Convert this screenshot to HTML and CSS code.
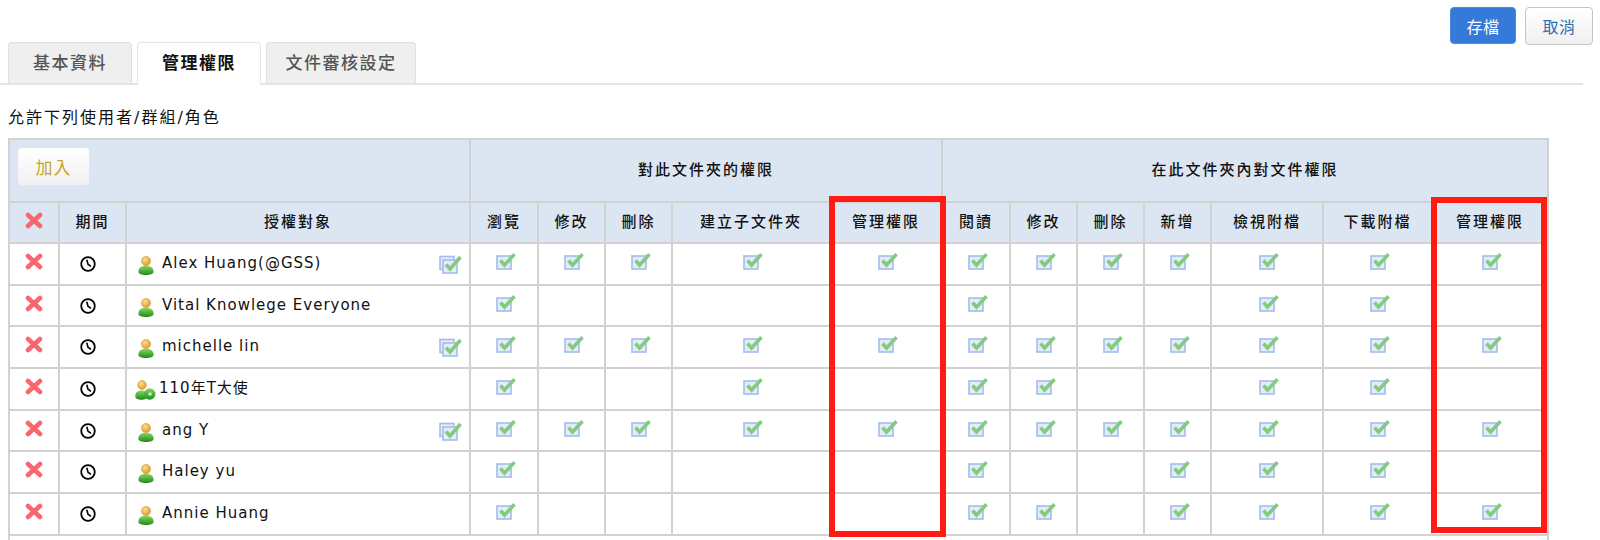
FILE: index.html
```html
<!DOCTYPE html>
<html lang="zh-Hant">
<head>
    <meta charset="UTF-8">
    <meta name="viewport" content="width=device-width, initial-scale=1.0">
    <title>管理權限</title>
    <link rel="stylesheet" href="styles.css">
</head>
<body>
    <!-- icon sprites -->
    <svg class="sprites" width="0" height="0">
        <defs>
            <radialGradient id="headFill" cx="40%" cy="35%" r="70%">
                <stop offset="0" stop-color="#ffe08a"/>
                <stop offset="1" stop-color="#e08f2a"/>
            </radialGradient>
            <linearGradient id="bodyFill" x1="0" y1="0" x2="0" y2="1">
                <stop offset="0" stop-color="#86d65e"/>
                <stop offset="1" stop-color="#1c8c1c"/>
            </linearGradient>
        </defs>
        <symbol id="i-del" viewBox="0 0 18 17">
            <path d="M3 3L15 14M15 3L3 14" fill="none" stroke="#fa656f" stroke-width="4.6" stroke-linecap="round"/>
        </symbol>
        <symbol id="i-clock" viewBox="0 0 16 16">
            <circle cx="8" cy="8" r="6.8" fill="none" stroke="#000" stroke-width="1.8"/>
            <path d="M6.8 3.8L8 8.2L11 10.4" fill="none" stroke="#000" stroke-width="1.6"/>
        </symbol>
        <symbol id="i-user" viewBox="0 0 16 19">
            <path d="M.4 16C.4 12 3 9.800 8 9.800s7.600 2.200 7.600 6.200c0 2-3.400 3-7.600 3s-7.600-1-7.600-3z" fill="url(#bodyFill)"/>
            <circle cx="8" cy="5" r="4.600" fill="url(#headFill)" stroke="#d69a45" stroke-width=".6"/>
        </symbol>
        <symbol id="i-group" viewBox="0 0 21 20">
            <path d="M.3 16.500C.3 12.500 2.500 10.500 6.500 10.500s6 2 6 6c0 2-2.800 3.300-6 3.300s-6.200-1.300-6.200-3.300z" fill="url(#bodyFill)"/>
            <circle cx="7" cy="5" r="4.400" fill="url(#headFill)" stroke="#d69a45" stroke-width=".6"/>
            <circle cx="14.700" cy="14" r="5.800" fill="url(#bodyFill)"/>
            <circle cx="15" cy="14" r="1.800" fill="#c8f0c0"/>
        </symbol>
        <symbol id="i-check" viewBox="0 0 20 18">
            <rect x="1" y="4" width="14" height="13" fill="#e4ecfa" stroke="#a3bdec" stroke-width="1.6"/>
            <path d="M4.500 8.500L8.500 13L18.500 2.300" fill="none" stroke="#84cb80" stroke-width="3.600"/>
        </symbol>
        <symbol id="i-check-all" viewBox="0 0 23 19">
            <rect x="1" y="1.500" width="14" height="13" fill="#e4ecfa" stroke="#a3bdec" stroke-width="1.6"/>
            <rect x="4" y="5" width="14" height="13" fill="#e4ecfa" stroke="#a3bdec" stroke-width="1.6"/>
            <path d="M7 9.500L11 14L21.500 2" fill="none" stroke="#84cb80" stroke-width="3.600"/>
        </symbol>
    </svg>

    <div class="page">
        <div class="toolbar">
            <button class="btn btn-save">存檔</button>
            <button class="btn btn-cancel">取消</button>
        </div>

        <div class="tabs">
            <div class="tab">基本資料</div>
            <div class="tab active">管理權限</div>
            <div class="tab tab-wide">文件審核設定</div>
        </div>

        <p class="allow-label">允許下列使用者/群組/角色</p>

        <div class="table-wrap">
            <table class="perm-table">
                <colgroup>
                    <col class="w50"><col class="w67"><col class="w344">
                    <col class="w68"><col class="w67"><col class="w67"><col class="w158"><col class="w112">
                    <col class="w68"><col class="w67"><col class="w67"><col class="w67"><col class="w112"><col class="w109"><col class="w116">
                </colgroup>
                <thead>
                    <tr class="head-top">
                        <th colspan="3" class="add-cell"><button class="btn-add">加入</button></th>
                        <th colspan="5">對此文件夾的權限</th>
                        <th colspan="7">在此文件夾內對文件權限</th>
                    </tr>
                    <tr class="head-sub">
                        <th><svg class="ic-del"><use href="#i-del"/></svg></th>
                        <th>期間</th>
                        <th>授權對象</th>
                        <th>瀏覽</th><th>修改</th><th>刪除</th><th>建立子文件夾</th><th>管理權限</th>
                        <th>閱讀</th><th>修改</th><th>刪除</th><th>新增</th><th>檢視附檔</th><th>下載附檔</th><th>管理權限</th>
                    </tr>
                </thead>
                <tbody>
                    <tr>
                        <td><svg class="ic-del"><use href="#i-del"/></svg></td>
                        <td><svg class="ic-clock"><use href="#i-clock"/></svg></td>
                        <td><div class="who"><svg class="ic-user"><use href="#i-user"/></svg><span class="who-name">Alex Huang(@GSS)</span><svg class="ic-all"><use href="#i-check-all"/></svg></div></td>
                        <td><svg class="ic-check"><use href="#i-check"/></svg></td>
                        <td><svg class="ic-check"><use href="#i-check"/></svg></td>
                        <td><svg class="ic-check"><use href="#i-check"/></svg></td>
                        <td><svg class="ic-check"><use href="#i-check"/></svg></td>
                        <td><svg class="ic-check"><use href="#i-check"/></svg></td>
                        <td><svg class="ic-check"><use href="#i-check"/></svg></td>
                        <td><svg class="ic-check"><use href="#i-check"/></svg></td>
                        <td><svg class="ic-check"><use href="#i-check"/></svg></td>
                        <td><svg class="ic-check"><use href="#i-check"/></svg></td>
                        <td><svg class="ic-check"><use href="#i-check"/></svg></td>
                        <td><svg class="ic-check"><use href="#i-check"/></svg></td>
                        <td><svg class="ic-check"><use href="#i-check"/></svg></td>
                    </tr>
                    <tr>
                        <td><svg class="ic-del"><use href="#i-del"/></svg></td>
                        <td><svg class="ic-clock"><use href="#i-clock"/></svg></td>
                        <td><div class="who"><svg class="ic-user"><use href="#i-user"/></svg><span class="who-name">Vital Knowlege Everyone</span></div></td>
                        <td><svg class="ic-check"><use href="#i-check"/></svg></td>
                        <td></td>
                        <td></td>
                        <td></td>
                        <td></td>
                        <td><svg class="ic-check"><use href="#i-check"/></svg></td>
                        <td></td>
                        <td></td>
                        <td></td>
                        <td><svg class="ic-check"><use href="#i-check"/></svg></td>
                        <td><svg class="ic-check"><use href="#i-check"/></svg></td>
                        <td></td>
                    </tr>
                    <tr>
                        <td><svg class="ic-del"><use href="#i-del"/></svg></td>
                        <td><svg class="ic-clock"><use href="#i-clock"/></svg></td>
                        <td><div class="who"><svg class="ic-user"><use href="#i-user"/></svg><span class="who-name">michelle lin</span><svg class="ic-all"><use href="#i-check-all"/></svg></div></td>
                        <td><svg class="ic-check"><use href="#i-check"/></svg></td>
                        <td><svg class="ic-check"><use href="#i-check"/></svg></td>
                        <td><svg class="ic-check"><use href="#i-check"/></svg></td>
                        <td><svg class="ic-check"><use href="#i-check"/></svg></td>
                        <td><svg class="ic-check"><use href="#i-check"/></svg></td>
                        <td><svg class="ic-check"><use href="#i-check"/></svg></td>
                        <td><svg class="ic-check"><use href="#i-check"/></svg></td>
                        <td><svg class="ic-check"><use href="#i-check"/></svg></td>
                        <td><svg class="ic-check"><use href="#i-check"/></svg></td>
                        <td><svg class="ic-check"><use href="#i-check"/></svg></td>
                        <td><svg class="ic-check"><use href="#i-check"/></svg></td>
                        <td><svg class="ic-check"><use href="#i-check"/></svg></td>
                    </tr>
                    <tr>
                        <td><svg class="ic-del"><use href="#i-del"/></svg></td>
                        <td><svg class="ic-clock"><use href="#i-clock"/></svg></td>
                        <td><div class="who"><svg class="ic-group"><use href="#i-group"/></svg><span class="who-name">110年T大使</span></div></td>
                        <td><svg class="ic-check"><use href="#i-check"/></svg></td>
                        <td></td>
                        <td></td>
                        <td><svg class="ic-check"><use href="#i-check"/></svg></td>
                        <td></td>
                        <td><svg class="ic-check"><use href="#i-check"/></svg></td>
                        <td><svg class="ic-check"><use href="#i-check"/></svg></td>
                        <td></td>
                        <td></td>
                        <td><svg class="ic-check"><use href="#i-check"/></svg></td>
                        <td><svg class="ic-check"><use href="#i-check"/></svg></td>
                        <td></td>
                    </tr>
                    <tr>
                        <td><svg class="ic-del"><use href="#i-del"/></svg></td>
                        <td><svg class="ic-clock"><use href="#i-clock"/></svg></td>
                        <td><div class="who"><svg class="ic-user"><use href="#i-user"/></svg><span class="who-name">ang Y</span><svg class="ic-all"><use href="#i-check-all"/></svg></div></td>
                        <td><svg class="ic-check"><use href="#i-check"/></svg></td>
                        <td><svg class="ic-check"><use href="#i-check"/></svg></td>
                        <td><svg class="ic-check"><use href="#i-check"/></svg></td>
                        <td><svg class="ic-check"><use href="#i-check"/></svg></td>
                        <td><svg class="ic-check"><use href="#i-check"/></svg></td>
                        <td><svg class="ic-check"><use href="#i-check"/></svg></td>
                        <td><svg class="ic-check"><use href="#i-check"/></svg></td>
                        <td><svg class="ic-check"><use href="#i-check"/></svg></td>
                        <td><svg class="ic-check"><use href="#i-check"/></svg></td>
                        <td><svg class="ic-check"><use href="#i-check"/></svg></td>
                        <td><svg class="ic-check"><use href="#i-check"/></svg></td>
                        <td><svg class="ic-check"><use href="#i-check"/></svg></td>
                    </tr>
                    <tr>
                        <td><svg class="ic-del"><use href="#i-del"/></svg></td>
                        <td><svg class="ic-clock"><use href="#i-clock"/></svg></td>
                        <td><div class="who"><svg class="ic-user"><use href="#i-user"/></svg><span class="who-name">Haley yu</span></div></td>
                        <td><svg class="ic-check"><use href="#i-check"/></svg></td>
                        <td></td>
                        <td></td>
                        <td></td>
                        <td></td>
                        <td><svg class="ic-check"><use href="#i-check"/></svg></td>
                        <td></td>
                        <td></td>
                        <td><svg class="ic-check"><use href="#i-check"/></svg></td>
                        <td><svg class="ic-check"><use href="#i-check"/></svg></td>
                        <td><svg class="ic-check"><use href="#i-check"/></svg></td>
                        <td></td>
                    </tr>
                    <tr>
                        <td><svg class="ic-del"><use href="#i-del"/></svg></td>
                        <td><svg class="ic-clock"><use href="#i-clock"/></svg></td>
                        <td><div class="who"><svg class="ic-user"><use href="#i-user"/></svg><span class="who-name">Annie Huang</span></div></td>
                        <td><svg class="ic-check"><use href="#i-check"/></svg></td>
                        <td></td>
                        <td></td>
                        <td></td>
                        <td></td>
                        <td><svg class="ic-check"><use href="#i-check"/></svg></td>
                        <td><svg class="ic-check"><use href="#i-check"/></svg></td>
                        <td></td>
                        <td><svg class="ic-check"><use href="#i-check"/></svg></td>
                        <td><svg class="ic-check"><use href="#i-check"/></svg></td>
                        <td><svg class="ic-check"><use href="#i-check"/></svg></td>
                        <td><svg class="ic-check"><use href="#i-check"/></svg></td>
                    </tr>
                    <tr class="foot-row">
                        <td colspan="15"></td>
                    </tr>
                </tbody>
            </table>

            <!-- red annotation boxes over the two 管理權限 columns -->
            <div class="mark mark-folder"></div>
            <div class="mark mark-file"></div>
        </div>
    </div>
</body>
</html>
```

FILE: styles.css
```css
* {
    margin: 0;
    padding: 0;
    box-sizing: border-box;
    font-family: "DejaVu Sans", "Noto Sans CJK TC", sans-serif;
}

html, body {
    height: 540px;
    overflow: hidden;
    background: #fff;
}

.sprites {
    display: block;
    height: 0;
}

.page {
    height: 540px;
    overflow: hidden;
}

.toolbar {
    display: flex;
    justify-content: flex-end;
    gap: 9px;
    height: 42px;
    padding: 7px 7px 0 0;
}

.btn {
    height: 37px;
    border-radius: 4px;
    font-size: 16px;
    letter-spacing: 0.5px;
    cursor: pointer;
}

.btn-save {
    width: 66px;
    background: #3579d9;
    border: 1px solid #4b8ae0;
    color: #fff;
}

.btn-cancel {
    width: 68px;
    height: 38px;
    background: linear-gradient(to bottom, #fff, #f0f0f0);
    border: 1px solid #c4c4c4;
    color: #2f6fb5;
}

.tabs {
    display: flex;
    align-items: flex-start;
    gap: 5px;
    width: 1583px;
    height: 43px;
    padding-left: 8px;
    border-bottom: 2px solid #e4e4e4;
}

.tab {
    width: 124px;
    height: 41px;
    background: #efefef;
    border: 1px solid #e0e0e0;
    border-bottom: none;
    border-radius: 4px 4px 0 0;
    color: #555;
    font-size: 17px;
    font-weight: 500;
    letter-spacing: 1.5px;
    text-align: center;
    line-height: 40px;
}

.tab-wide {
    width: 150px;
}

.tab.active {
    height: 43px;
    background: #fff;
    color: #111;
    font-weight: 700;
    border-color: #e4e4e4;
}

.allow-label {
    height: 53px;
    padding: 22px 0 0 8px;
    font-size: 16px;
    line-height: 22px;
    letter-spacing: 2px;
    color: #111;
}

.table-wrap {
    position: relative;
    width: 1539px;
    margin-left: 8px;
}

.perm-table {
    width: 1539px;
    table-layout: fixed;
    border-collapse: collapse;
    border: 1px solid #d2d2d2;
}

.w50 { width: 50px; }
.w67 { width: 67px; }
.w68 { width: 68px; }
.w109 { width: 109px; }
.w112 { width: 112px; }
.w116 { width: 116px; }
.w158 { width: 158px; }
.w344 { width: 344px; }

.perm-table th, .perm-table td {
    border: 2px solid #d2d2d2;
    text-align: center;
}

.perm-table th {
    background: #dce6f2;
    font-size: 15px;
    font-weight: 500;
    letter-spacing: 2px;
    color: #111;
    padding-bottom: 4px;
}

.head-top {
    height: 63px;
}

.head-sub {
    height: 41px;
}

.perm-table tbody tr {
    height: 41.7px;
}

.perm-table tbody .foot-row {
    height: 30px;
}

.perm-table td {
    vertical-align: top;
    padding-top: 9px;
}

.perm-table th.add-cell {
    text-align: left;
    padding: 0 0 8px 8px;
}

.btn-add {
    width: 71px;
    height: 37px;
    background: linear-gradient(to bottom, #fff, #f1f1f1);
    border: none;
    border-radius: 4px;
    color: #c8a42c;
    font-size: 17px;
    letter-spacing: 1px;
}

.who {
    display: flex;
    align-items: flex-start;
    padding-left: 11px;
}

.who-name {
    flex: 1;
    margin-left: 8px;
    text-align: left;
    font-size: 15px;
    line-height: 20px;
    letter-spacing: 1px;
    color: #111;
}

svg {
    display: inline-block;
    vertical-align: top;
}

.ic-del {
    width: 18px;
    height: 17px;
}

.ic-clock {
    width: 16px;
    height: 16px;
    margin: 3px 10px 0 0;
}

.ic-user {
    width: 16px;
    height: 19px;
    margin-top: 3px;
}

.ic-group {
    width: 21px;
    height: 20px;
    margin: 2px -5px 0 -3px;
}

.ic-check {
    width: 20px;
    height: 18px;
    margin: -1px 0 0 4px;
}

.ic-all {
    width: 23px;
    height: 19px;
    margin: 2px 7px 0 0;
}

.mark {
    position: absolute;
    border: 6px solid #ff1a12;
}

.mark-folder {
    left: 821px;
    top: 58px;
    width: 117px;
    height: 341px;
}

.mark-file {
    left: 1423px;
    top: 59px;
    width: 116px;
    height: 336px;
}
```
